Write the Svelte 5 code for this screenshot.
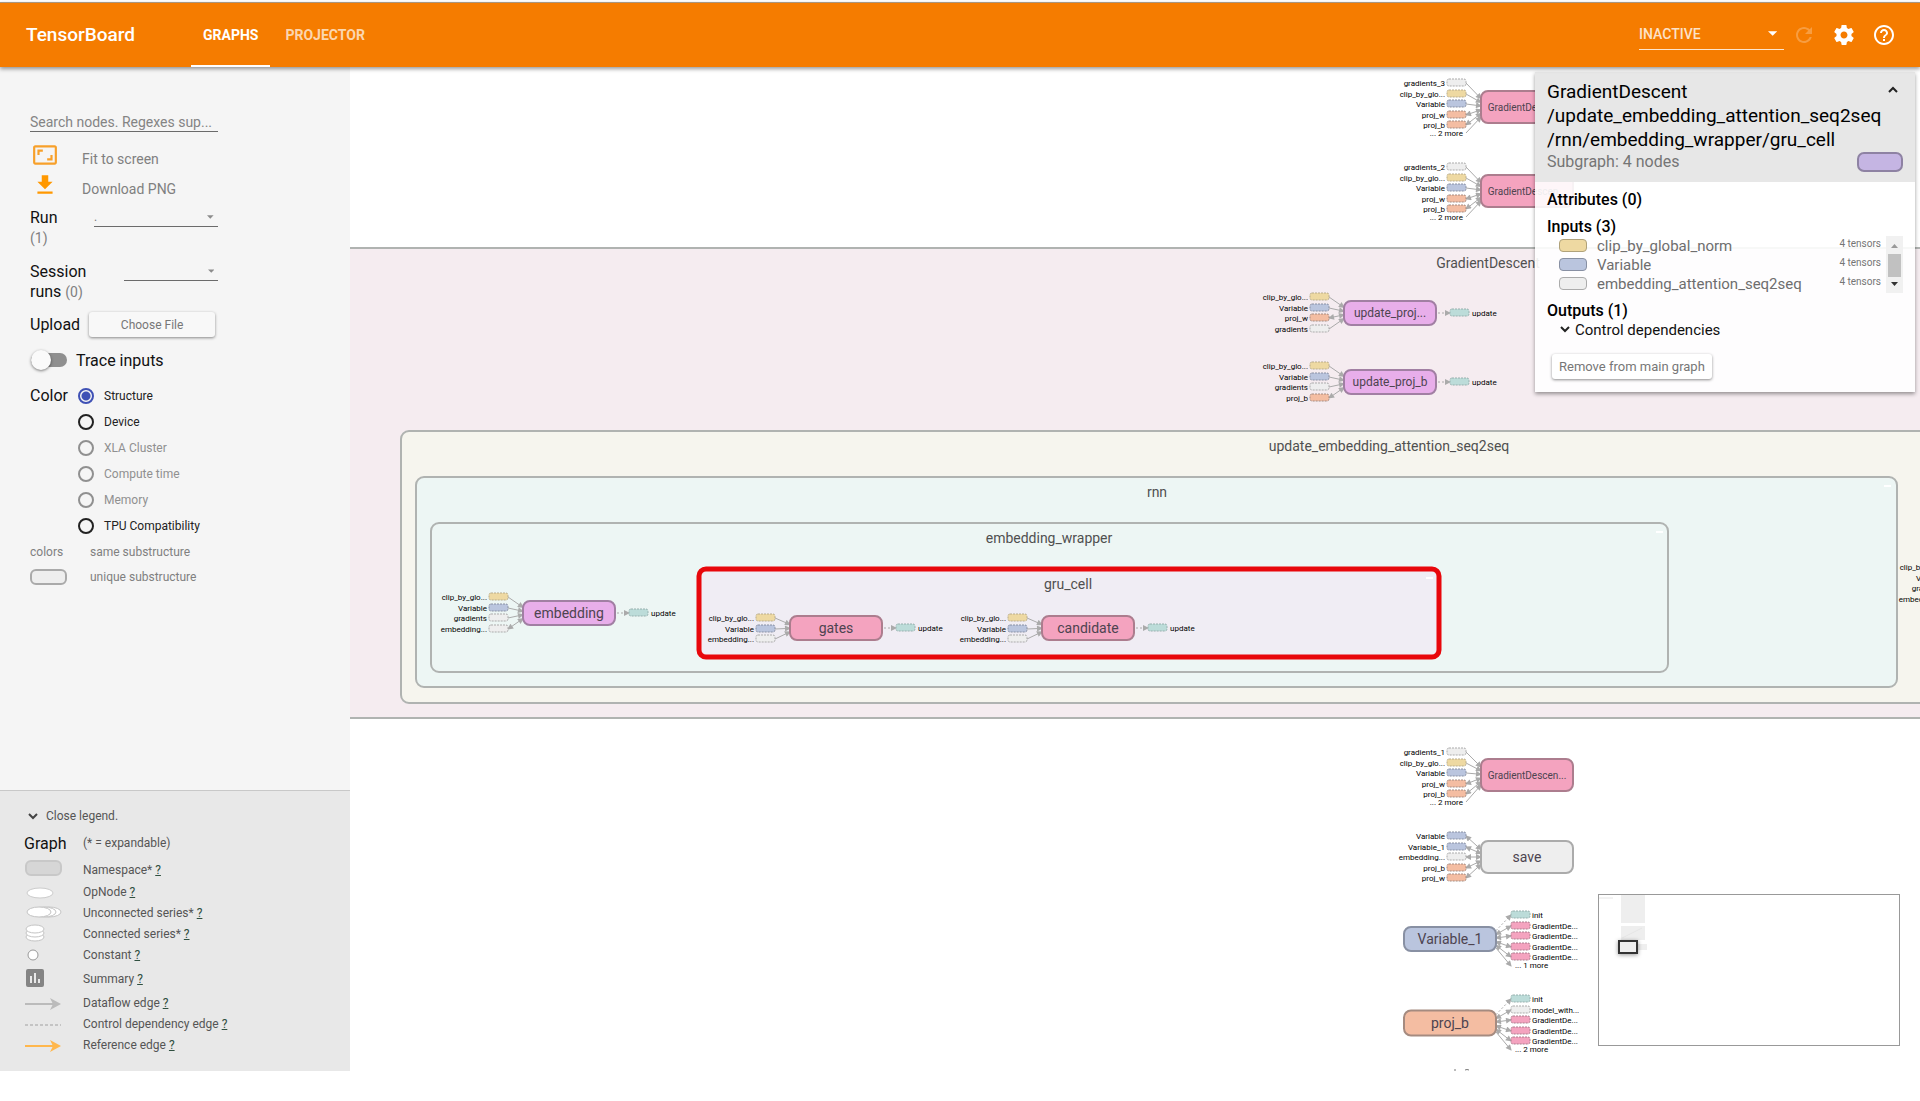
<script>
  const palette = {
    pink: ['#f4a3bf', '#ac7d8e'],
    orchid: ['#e8aeea', '#a17fa3'],
    grey: ['#eeeeee', '#ababab'],
    blue: ['#bac5de', '#8890a3'],
    orange: ['#f4bda2', '#a58b80'],
    yellow: ['#eed9a2', '#b9ad8c'],
    teal: ['#bcdcd9', '#96b0ae']
  };

  const norm = ['clip_by_glo...', 'yellow', 'in'];
  const variable = ['Variable', 'blue', 'in'];
  const embIn = ['embedding...', 'grey', 'in'];
  const gradIn = ['gradients', 'grey', 'in'];
  const init = ['init', 'teal', 'control'];
  const gd = ['GradientDe...', 'pink', 'both'];
  const projW = ['proj_w', 'orange', 'both'];
  const projB = ['proj_b', 'orange', 'both'];

  const nodes = [
    { text: 'GradientDescen...', x: 1481, y: 107, h: 32, size: 10, color: 'pink', ins: [['gradients_3', 'grey', 'in'], norm, variable, projW, projB], more: '... 2 more', start: 83 },
    { text: 'GradientDescen...', x: 1481, y: 191, h: 32, size: 10, color: 'pink', ins: [['gradients_2', 'grey', 'in'], norm, variable, projW, projB], more: '... 2 more', start: 167 },
    { text: 'update_proj...', x: 1344, y: 313, h: 24, size: 12, color: 'orchid', ins: [norm, variable, projW, gradIn], update: true, start: 297 },
    { text: 'update_proj_b', x: 1344, y: 382, h: 24, size: 12, color: 'orchid', ins: [norm, variable, gradIn, projB], update: true, start: 366 },
    { text: 'embedding', x: 523, y: 613, h: 24, size: 14, color: 'orchid', ins: [norm, variable, gradIn, ['embedding...', 'grey', 'both']], update: true, start: 597 },
    { text: 'gates', x: 790, y: 628, h: 24, size: 14, color: 'pink', ins: [norm, variable, embIn], update: true, start: 618 },
    { text: 'candidate', x: 1042, y: 628, h: 24, size: 14, color: 'pink', ins: [norm, variable, embIn], update: true, start: 618 },
    { text: 'embedding', x: 1981, y: 583, h: 24, size: 14, color: 'orchid', ins: [norm, variable, gradIn, embIn], start: 567 },
    { text: 'GradientDescen...', x: 1481, y: 775, h: 32, size: 10, color: 'pink', ins: [['gradients_1', 'grey', 'in'], norm, variable, projW, projB], more: '... 2 more', start: 752 },
    { text: 'save', x: 1481, y: 857, h: 32, size: 14, color: 'grey', ins: [['Variable', 'blue', 'both'], ['Variable_1', 'blue', 'both'], ['embedding...', 'grey', 'both'], projB, projW], start: 836 },
    { text: 'Variable_1', x: 1404, y: 939, h: 24, size: 14, color: 'blue', outs: [init, gd, gd, gd, gd], more: '... 1 more', start: 915 },
    { text: 'proj_b', x: 1404, y: 1023, h: 25, size: 14, color: 'orange', outs: [init, ['model_with...', 'grey', 'both'], gd, gd, gd], more: '... 2 more', start: 999 }
  ];
  const nodeWidth = 92;
  const rowY = (n, i) => n.start + Math.round(i * 10.6);
  const meetY = (n, y) => n.y + (y - n.y) * 0.35;

  const colorBy = [
    ['Structure', false], ['Device', false], ['XLA Cluster', true],
    ['Compute time', true], ['Memory', true], ['TPU Compatibility', false]
  ];
  let chosen = $state('Structure');
  let trace = $state(false);

  const legend = [
    ['namespace', 'Namespace*'], ['op', 'OpNode'], ['unconnected', 'Unconnected series*'],
    ['connected', 'Connected series*'], ['constant', 'Constant'], ['summary', 'Summary'],
    ['dataflow', 'Dataflow edge'], ['control', 'Control dependency edge'], ['reference', 'Reference edge']
  ];
  const inputs = [
    ['clip_by_global_norm', 'yellow'], ['Variable', 'blue'], ['embedding_attention_seq2seq', 'grey']
  ];
</script>

<div class="page">
  <header>
    <h1>TensorBoard</h1>
    <nav>
      <a class="active" href="#graphs">GRAPHS</a>
      <a href="#projector">PROJECTOR</a>
    </nav>
    <div class="tools">
      <div class="inactive">
        <select aria-label="Inactive dashboards"><option>INACTIVE</option></select>
        <svg width="10" height="5" viewBox="0 0 10 5"><path d="M0 0h10L5 5z" fill="#fff" /></svg>
      </div>
      <button class="dim" aria-label="Reload" disabled>
        <svg width="24" height="24" viewBox="0 0 24 24"><path fill="currentColor" d="M17.65 6.35C16.2 4.9 14.21 4 12 4c-4.42 0-7.99 3.58-7.99 8s3.57 8 7.99 8c3.73 0 6.84-2.55 7.73-6h-2.08c-.82 2.33-3.04 4-5.65 4-3.31 0-6-2.69-6-6s2.69-6 6-6c1.66 0 3.14.69 4.22 1.78L13 11h7V4l-2.35 2.35z" /></svg>
      </button>
      <button aria-label="Settings">
        <svg width="24" height="24" viewBox="0 0 24 24"><path fill="currentColor" d="M19.43 12.98c.04-.32.07-.64.07-.98s-.03-.66-.07-.98l2.11-1.65c.19-.15.24-.42.12-.64l-2-3.46c-.12-.22-.39-.3-.61-.22l-2.49 1c-.52-.4-1.08-.73-1.69-.98l-.38-2.65C14.46 2.18 14.25 2 14 2h-4c-.25 0-.46.18-.49.42l-.38 2.65c-.61.25-1.17.59-1.69.98l-2.49-1c-.23-.09-.49 0-.61.22l-2 3.46c-.13.22-.07.49.12.64l2.11 1.65c-.04.32-.07.65-.07.98s.03.66.07.98l-2.11 1.65c-.19.15-.24.42-.12.64l2 3.46c.12.22.39.3.61.22l2.49-1c.52.4 1.08.73 1.69.98l.38 2.65c.03.24.24.42.49.42h4c.25 0 .46-.18.49-.42l.38-2.65c.61-.25 1.17-.59 1.69-.98l2.49 1c.23.09.49 0 .61-.22l2-3.46c.12-.22.07-.49-.12-.64l-2.11-1.65zM12 15.5c-1.93 0-3.5-1.57-3.5-3.5s1.57-3.5 3.5-3.5 3.5 1.57 3.5 3.5-1.57 3.5-3.5 3.5z" /></svg>
      </button>
      <button aria-label="Help">
        <svg width="24" height="24" viewBox="0 0 24 24"><path fill="currentColor" d="M11 18h2v-2h-2v2zm1-16C6.48 2 2 6.48 2 12s4.48 10 10 10 10-4.48 10-10S17.52 2 12 2zm0 18c-4.41 0-8-3.59-8-8s3.59-8 8-8 8 3.59 8 8-3.59 8-8 8zm0-14c-2.21 0-4 1.79-4 4h2c0-1.1.9-2 2-2s2 .9 2 2c0 2-3 1.75-3 5h2c0-2.25 3-2.5 3-5 0-2.21-1.79-4-4-4z" /></svg>
      </button>
    </div>
  </header>

  <main>
    <aside>
      <div class="controls">
        <input class="search" type="text" aria-label="Search nodes" placeholder="Search nodes. Regexes sup..." />
        <button class="action">
          <svg width="26" height="26" viewBox="0 0 24 24"><path fill="#f7a02a" d="M19 12h-2v3h-3v2h5v-5zM7 9h3V7H5v5h2V9zm14-6H3c-1.1 0-2 .9-2 2v14c0 1.1.9 2 2 2h18c1.1 0 2-.9 2-2V5c0-1.1-.9-2-2-2zm0 16.01H3V4.99h18v14.02z" /></svg>
          <span>Fit to screen</span>
        </button>
        <button class="action">
          <svg width="26" height="26" viewBox="0 0 24 24"><path fill="#ff9800" d="M19 9h-4V3H9v6H5l7 7 7-7zM5 18v2h14v-2H5z" /></svg>
          <span>Download PNG</span>
        </button>
        <div class="field run">
          <label for="run">Run<br /><small>(1)</small></label>
          <div class="pick"><select id="run"><option>.</option></select><svg width="7" height="4" viewBox="0 0 6 3"><path d="M0 0h6L3 3z" fill="#8c8c8c" /></svg></div>
        </div>
        <div class="field session">
          <label for="session">Session<br />runs <small>(0)</small></label>
          <div class="pick"><select id="session"></select><svg width="7" height="4" viewBox="0 0 6 3"><path d="M0 0h6L3 3z" fill="#8c8c8c" /></svg></div>
        </div>
        <div class="upload"><span>Upload</span><button class="raised">Choose File</button></div>
        <label class="trace"><input type="checkbox" bind:checked={trace} />Trace inputs</label>
        <div class="color" role="radiogroup" aria-labelledby="color-title">
          <span id="color-title">Color</span>
          <div>
            {#each colorBy as [name, off]}
              <label class="radio" class:off><input type="radio" name="color" value={name} disabled={off} bind:group={chosen} />{name}</label>
            {/each}
          </div>
        </div>
        <div class="key"><span>colors</span>same substructure</div>
        <div class="key"><span><i></i></span>unique substructure</div>
      </div>

      <section class="legend">
        <button class="close">
          <svg width="10" height="7" viewBox="0 0 10 7"><path d="M1 1l4 4 4-4" fill="none" stroke="#444" stroke-width="2" /></svg>Close legend.
        </button>
        <div class="graph-title"><h2>Graph</h2>(* = expandable)</div>
        <ul>
          {#each legend as [kind, name]}
            <li class={kind}>
              <svg width="38" height="20" viewBox="0 0 38 20">
                {#if kind === 'namespace'}
                  <rect x="2" y="1" width="35" height="14" rx="5" fill="#d6d6d6" stroke="#c8c8c8" stroke-width="2" />
                {:else if kind === 'op'}
                  <ellipse cx="16" cy="11" rx="13" ry="5" fill="#fff" stroke="#ccc" />
                {:else if kind === 'unconnected'}
                  <ellipse cx="25" cy="9" rx="12" ry="5" fill="#fff" stroke="#c4c4c4" />
                  <ellipse cx="20" cy="9" rx="12" ry="5" fill="#fff" stroke="#c4c4c4" />
                  <ellipse cx="15" cy="9" rx="12" ry="5" fill="#fff" stroke="#c4c4c4" />
                {:else if kind === 'connected'}
                  <ellipse cx="11" cy="13" rx="9" ry="4" fill="#fff" stroke="#c4c4c4" />
                  <ellipse cx="11" cy="9" rx="9" ry="4" fill="#fff" stroke="#c4c4c4" />
                  <ellipse cx="11" cy="5" rx="9" ry="4" fill="#fff" stroke="#c4c4c4" />
                {:else if kind === 'constant'}
                  <circle cx="9" cy="10" r="5" fill="#fff" stroke="#999" />
                {:else if kind === 'summary'}
                  <path fill="#848484" d="M4 0h14q2 0 2 2v14q0 2-2 2H4q-2 0-2-2V2q0-2 2-2zM6 7v7h2V7zM10 4v10h2V4zM14 10v4h2v-4z" />
                {:else if kind === 'control'}
                  <path d="M1 11h36" stroke="#c4c4c4" stroke-width="2" stroke-dasharray="3 2" />
                {:else}
                  <path d="M1 11h28" stroke={kind === 'reference' ? '#ffb74d' : '#bbb'} stroke-width="2" />
                  <path d="M26 5l11 6-11 6 3-6z" fill={kind === 'reference' ? '#ffb74d' : '#bbb'} />
                {/if}
              </svg>
              <span>{name} <a href="#{kind}">?</a></span>
            </li>
          {/each}
        </ul>
      </section>
    </aside>

    <section class="canvas">
      <svg class="graph" role="img" aria-label="Computation graph">
        <defs>
          <marker id="tip" viewBox="0 0 6 6" refX="5" refY="3" markerWidth="7" markerHeight="6" markerUnits="userSpaceOnUse" orient="auto-start-reverse">
            <path d="M0 0L6 3L0 6z" fill="#aaa" />
          </marker>
        </defs>
        <g transform="translate(-350 -67)">
          <rect class="group" x="200" y="248" width="2600" height="470" fill="#f5ecf0" />
          <rect class="group" x="401" y="431" width="2200" height="272" rx="8" fill="#f6f5ee" />
          <rect class="group" x="416" y="477" width="1481" height="210" rx="8" fill="#edf6f4" />
          <rect class="group" x="431" y="523" width="1237" height="149" rx="8" fill="#edf6f4" />
          <rect class="selected" x="699" y="569" width="740" height="88" rx="7" />
          <path d="M1426 578h7M1884 486h7M1656 532h7" stroke="#fff" stroke-width="2" />
          <text class="title" x="1488" y="263">GradientDescent</text>
          <text class="title" x="1389" y="446">update_embedding_attention_seq2seq</text>
          <text class="title" x="1157" y="492">rnn</text>
          <text class="title" x="1049" y="538">embedding_wrapper</text>
          <text class="title" x="1068" y="584">gru_cell</text>
          <path d="M1455 1069v2M1465 1070q2-1 4 0" stroke="#777" fill="none" />

          {#each nodes as n}
            {#each n.ins ?? [] as [name, color, dir], i}
              {@const y = rowY(n, i)}
              <line class="edge" x1={n.x - 15} y1={y} x2={n.x} y2={meetY(n, y)} marker-end="url(#tip)" marker-start={dir === 'both' ? 'url(#tip)' : undefined} />
              <rect class="note" x={n.x - 34} y={y - 4} width="19" height="7" rx="2" fill={palette[color][0]} stroke={palette[color][1]} />
              <text class="small end" x={n.x - 36} y={y}>{name}</text>
            {/each}
            {#each n.outs ?? [] as [name, color, dir], i}
              {@const y = rowY(n, i)}
              <line class="edge" class:dotted={dir === 'control'} x1={n.x + nodeWidth} y1={meetY(n, y)} x2={n.x + 107} y2={y} marker-end="url(#tip)" marker-start={dir === 'both' ? 'url(#tip)' : undefined} />
              <rect class="note" x={n.x + 107} y={y - 4} width="19" height="7" rx="2" fill={palette[color][0]} stroke={palette[color][1]} />
              <text class="small" x={n.x + 128} y={y}>{name}</text>
            {/each}
            {#if n.more && n.ins}
              <line class="edge" x1={n.x - 15} y1={n.start + 50} x2={n.x} y2={n.y + 10} marker-end="url(#tip)" />
              <text class="small end" x={n.x - 18} y={n.start + 50}>{n.more}</text>
            {:else if n.more}
              <line class="edge" x1={n.x + nodeWidth} y1={n.y + 9} x2={n.x + 107} y2={n.start + 51} marker-end="url(#tip)" />
              <text class="small" x={n.x + 111} y={n.start + 50}>{n.more}</text>
            {/if}
            {#if n.update}
              <line class="edge dotted" x1={n.x + nodeWidth + 2} y1={n.y} x2={n.x + 106} y2={n.y} marker-end="url(#tip)" />
              <rect class="note" x={n.x + 106} y={n.y - 4} width="19" height="7" rx="2" fill={palette.teal[0]} stroke={palette.teal[1]} />
              <text class="small" x={n.x + 128} y={n.y}>update</text>
            {/if}
            <rect class="node" x={n.x} y={n.y - n.h / 2} width={nodeWidth} height={n.h} rx="7" fill={palette[n.color][0]} stroke={palette[n.color][1]} />
            <text class="name" class:s10={n.size === 10} class:s12={n.size === 12} x={n.x + 46} y={n.y}>{n.text}</text>
          {/each}
        </g>
      </svg>

      <article class="card">
        <div class="card-head">
          <div class="card-title">
            <h2>GradientDescent<wbr />/update_embedding_attention_seq2seq<wbr />/rnn/embedding_wrapper/gru_cell</h2>
            <button aria-label="Collapse"><svg width="12" height="8" viewBox="0 0 12 8"><path d="M2 6l4-4 4 4" fill="none" stroke="#222" stroke-width="2" /></svg></button>
          </div>
          <div class="sub"><span>Subgraph: 4 nodes</span><i></i></div>
        </div>
        <div class="card-body">
          <h3>Attributes (0)</h3>
          <h3>Inputs (3)</h3>
          <div class="list">
            <ul>
              {#each inputs as [name, color]}
                <li><i class={color}></i><span>{name}</span><small>4 tensors</small></li>
              {/each}
            </ul>
            <div class="scroll">
              <svg width="7" height="4" viewBox="0 0 7 4"><path d="M0 4h7L3.5 0z" fill="#999" /></svg>
              <b></b>
              <svg width="7" height="4" viewBox="0 0 7 4"><path d="M0 0h7L3.5 4z" fill="#333" /></svg>
            </div>
          </div>
          <h3 class="outputs">Outputs (1)</h3>
          <button class="deps"><svg width="10" height="7" viewBox="0 0 10 7"><path d="M1 1l4 4 4-4" fill="none" stroke="#222" stroke-width="2" /></svg>Control dependencies</button>
          <button class="raised remove">Remove from main graph</button>
        </div>
      </article>

      <svg class="minimap" viewBox="0 0 302 152" role="img" aria-label="Minimap">
        <rect x="0" y="0" width="302" height="152" fill="#fff" stroke="#999" stroke-width="2" />
        <rect x="23" y="1" width="24" height="28" fill="#eee" />
        <rect x="23" y="32" width="24" height="14" fill="#eee" />
        <path d="M24 44l20-10M1 4h14" stroke="#e6e6e6" />
        <rect x="40" y="50" width="9" height="6" fill="#efefef" />
        <rect class="view" x="21" y="47" width="18" height="12" fill="#eee" stroke="#333" />
      </svg>
    </section>
  </main>
</div>

<style>
  :global(body) { margin: 0; background: #fff; font-family: Roboto, sans-serif; color: #111; }
  * { box-sizing: border-box; }
  button, select, input { font: inherit; color: inherit; }
  button { border: 0; padding: 0; background: none; text-align: left; cursor: pointer; }
  h1, h2, h3, ul { margin: 0; padding: 0; list-style: none; }
  h1, h3 { font-weight: 500; }
  select { appearance: none; border: 0; border-radius: 0; background: none; padding: 0; width: 100%; }
  .page { min-height: 100vh; padding: 2px 0 30px; display: flex; flex-direction: column; }

  header { position: relative; z-index: 2; display: flex; height: 65px; border-top: 1px solid #a9967f; background: #f57c00; color: #fff; box-shadow: 0 2px 4px rgba(0, 0, 0, .4); }
  h1 { width: 191px; padding-left: 26px; font-size: 19px; line-height: 64px; }
  nav { display: flex; }
  nav a { padding: 0 12px; margin-right: 3px; line-height: 64px; font-size: 14px; font-weight: 700; color: rgba(255, 255, 255, .7); text-decoration: none; }
  nav .active { color: #fff; box-shadow: inset 0 -2px #fff; }
  .tools { margin-left: auto; padding-right: 24px; display: flex; align-items: center; gap: 16px; }
  .tools button { display: flex; }
  .tools .dim { color: rgba(255, 255, 255, .25); }
  .inactive { display: flex; align-items: center; width: 145px; height: 30px; margin-right: -8px; padding: 0 7px 2px 0; border-bottom: 1px solid rgba(255, 255, 255, .8); font-size: 14px; font-weight: 500; color: rgba(255, 255, 255, .8); }

  main { flex: 1; display: flex; min-height: 0; }
  aside { width: 350px; flex: none; display: flex; flex-direction: column; background: #f5f5f5; }
  .controls { flex: 1; width: 248px; padding: 41px 30px 0; display: flex; flex-direction: column; font-size: 16px; }
  .search { width: 100%; height: 24px; margin-bottom: 8px; padding: 4px 0 0; border: 0; border-bottom: 1px solid #6b6b6b; background: none; outline: 0; font-size: 14px; }
  .search::placeholder { color: #848484; opacity: 1; }
  .action { display: flex; align-items: center; height: 30px; padding-left: 2px; gap: 24px; font-size: 14px; color: #808080; }
  .action span { padding-top: 8px; }
  .field { display: flex; justify-content: space-between; align-items: flex-start; line-height: 20px; }
  .field small { font-size: 14px; color: #808080; }
  .run { margin: 8px 0 14px; }
  .pick { display: flex; align-items: center; width: 94px; height: 19px; padding-right: 4px; border-bottom: 1px solid #6b6b6b; font-size: 12px; color: #777; }
  .run .pick { width: 124px; }
  .upload { display: flex; align-items: center; gap: 9px; margin-top: 10px; height: 25px; }
  .raised { border-radius: 3px; background: #f8f8f8; box-shadow: 0 1px 3px rgba(0, 0, 0, .45); text-align: center; color: #777; }
  .upload .raised { width: 126px; height: 25px; font-size: 12px; }
  .trace { display: flex; align-items: center; gap: 9px; height: 20px; margin: 13px 0; }
  .trace input { appearance: none; display: flex; align-items: center; width: 36px; height: 14px; margin: 0 0 0 1px; border-radius: 7px; background: #8f8f8f; }
  .trace input::before { content: ''; width: 20px; height: 20px; flex: none; border-radius: 50%; background: #fafafa; box-shadow: 0 1px 3px rgba(0, 0, 0, .5); }
  .trace input:checked::before { margin-left: auto; }
  .color { display: flex; line-height: 26px; }
  #color-title { width: 48px; }
  .radio { display: flex; align-items: center; gap: 10px; height: 26px; font-size: 12px; color: #222; }
  .radio.off { color: #909090; }
  .radio input { appearance: none; width: 16px; height: 16px; margin: 0; border: 2px solid #222; border-radius: 50%; }
  .radio.off input { border-color: #909090; }
  .radio input:checked { border-color: #3f51b5; background: radial-gradient(circle, #3f51b5 4px, transparent 5px); }
  .key { display: flex; align-items: center; height: 25px; font-size: 12px; color: #808080; }
  .key span { width: 60px; }
  .key i { display: block; width: 37px; height: 16px; border: 2px solid #aaa; border-radius: 6px; background: #eee; }

  .legend { border-top: 1px solid #c8c8c8; background: #e8e8e8; padding: 15px 24px 16px; font-size: 12px; color: #555; }
  .close { display: flex; align-items: center; gap: 8px; height: 20px; padding-left: 4px; font-size: 12px; }
  .graph-title { display: flex; align-items: center; height: 26px; margin: 4px 0 3px; }
  .graph-title h2 { width: 59px; font-size: 16px; font-weight: 400; color: #111; }
  .legend li { display: flex; align-items: center; gap: 21px; height: 21px; }
  .legend .namespace { height: 22px; }
  .legend .summary { height: 27px; }
  .legend a { color: #2f4f3f; }

  .canvas { position: relative; flex: 1; min-width: 0; overflow: hidden; }
  .graph { position: absolute; inset: 0; width: 100%; height: 100%; }
  .group { stroke: #b0b3b1; stroke-width: 2; }
  .selected { fill: #f0edf4; stroke: #e8070b; stroke-width: 5; }
  text { dominant-baseline: central; fill: #000; }
  .title { font-size: 14px; fill: #505050; text-anchor: middle; }
  .name { font-size: 14px; fill: #4d4450; text-anchor: middle; }
  .s12 { font-size: 12px; }
  .s10 { font-size: 10px; }
  .small { font-size: 8px; }
  .end { text-anchor: end; }
  .edge { stroke: #aaa; stroke-width: 1; }
  .dotted { stroke-dasharray: 2 2; }
  .note { stroke-width: 1; stroke-dasharray: 2 1; }
  .node { stroke-width: 2; }

  .card { position: absolute; top: 5px; right: 5px; width: 380px; background: rgba(255, 255, 255, .9); box-shadow: 0 2px 4px rgba(0, 0, 0, .4); }
  .card-head { padding: 8px 12px 10px; background: #e7e7e7; }
  .card-title { display: flex; justify-content: space-between; align-items: flex-start; }
  .card h2 { font-size: 19px; line-height: 24px; font-weight: 400; width: 336px; color: #000; }
  .card-title button { display: flex; margin: 6px 4px 0 0; }
  .sub { display: flex; justify-content: space-between; height: 20px; line-height: 20px; font-size: 16px; color: #757575; }
  .sub i { width: 46px; height: 20px; border: 2px solid #8e82a3; border-radius: 7px; background: #c5b5e3; }
  .card-body { padding: 8px 12px 13px; }
  .card h3 { font-size: 16px; line-height: 20px; margin-bottom: 7px; color: #000; }
  .card .list { display: flex; height: 57px; margin-top: -8px; }
  .list ul { flex: 1; }
  .list li { display: flex; align-items: center; height: 19px; padding-left: 12px; font-size: 15px; color: #6e6e6e; }
  .list li i { width: 28px; height: 13px; margin-right: 10px; border: 1px solid #b0a27a; border-radius: 4px; background: #eed9a2; }
  .list li .blue { border-color: #8890a3; background: #bac5de; }
  .list li .grey { border-color: #ababab; background: #eee; }
  .list small { margin: 0 5px 4px auto; font-size: 10px; color: #757575; }
  .scroll { width: 17px; display: flex; flex-direction: column; align-items: center; padding: 8px 2px 7px; background: #f1f1f1; }
  .scroll b { align-self: stretch; height: 23px; margin: 6px 0 auto; background: #c1c1c1; }
  .card .outputs { margin: 8px 0 0; }
  .deps { display: flex; align-items: center; gap: 5px; height: 17px; padding-left: 13px; font-size: 15px; color: #111; }
  .remove { margin: 16px 0 0 5px; padding: 0 7px; height: 25px; font-size: 13px; background: #fff; }
  .minimap { position: absolute; right: 20px; bottom: 25px; width: 302px; height: 152px; }
  .view { stroke-width: 2; filter: drop-shadow(0 1px 2px rgba(0, 0, 0, .4)); }
</style>
